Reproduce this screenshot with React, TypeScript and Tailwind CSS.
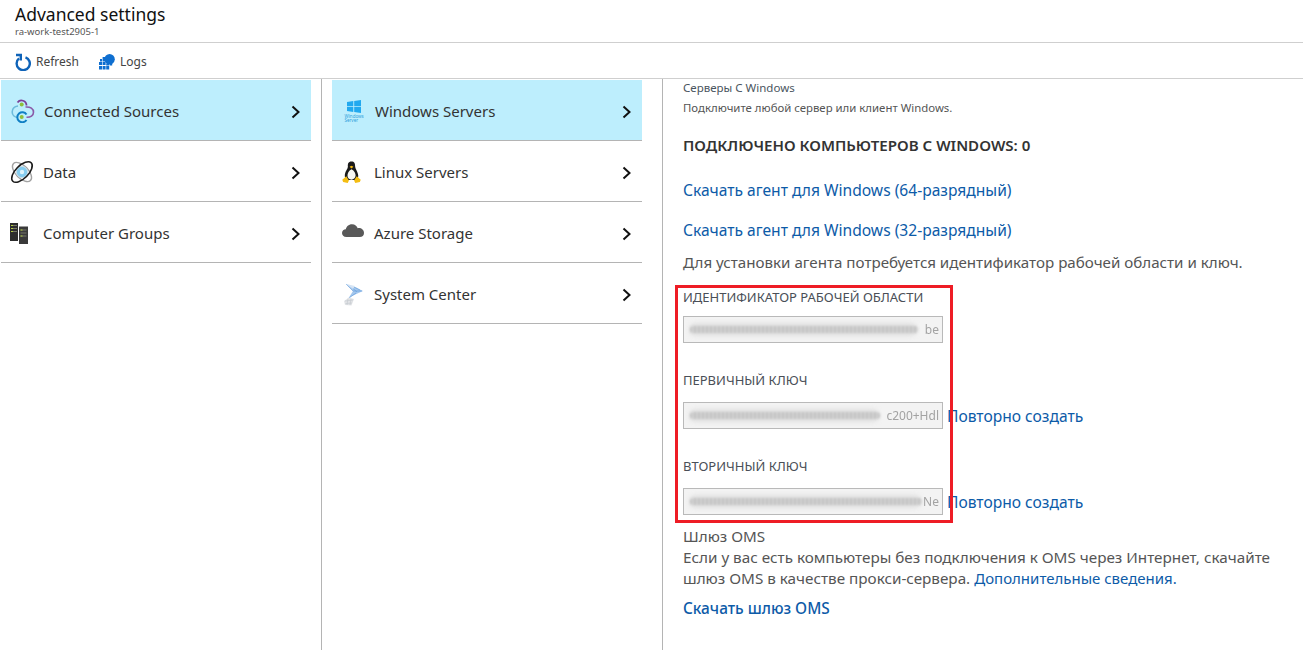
const sans = "font-['Noto_Sans','Open_Sans',sans-serif]";

function Chevron() {
  return (
    <svg width="10" height="14" viewBox="0 0 10 14" className="mt-[1px] shrink-0">
      <path d="M1.5 1.5 L7.5 7 L1.5 12.5" fill="none" stroke="#111" strokeWidth="2" />
    </svg>
  );
}

function ConnectedIcon() {
  return (
    <svg width="24" height="24" viewBox="0 0 24 24">
      <path d="M6.5 3.5 A5 5 0 0 1 15.5 6.5" fill="none" stroke="#7a3f98" strokeWidth="1.8" />
      <path d="M14.5 8 C19.5 7.5 22.5 10 22.5 13.2 C22.5 16.5 19.5 18.5 15.5 18.3" fill="none" stroke="#8a5aa8" strokeWidth="1.6" />
      <path d="M7 7 C3.5 7.5 1.2 10 1.2 13 C1.2 16 3.5 18.3 6.5 18.5" fill="none" stroke="#6dbbdc" strokeWidth="1.6" />
      <path d="M15.5 15.5 A5 5 0 1 0 15.5 21" fill="none" stroke="#0f7fc4" strokeWidth="2" />
      <circle cx="10.7" cy="5.5" r="2" fill="#8fbe3a" /><circle cx="10.7" cy="18" r="2" fill="#8fbe3a" />
    </svg>
  );
}

function DataIcon() {
  return (
    <svg width="24" height="24" viewBox="0 0 24 24">
      <ellipse cx="12" cy="12" rx="12" ry="6.2" fill="none" stroke="#a2a2a2" strokeWidth="1.4" transform="rotate(45 12 12)" />
      <circle cx="12" cy="12" r="5.6" fill="#86cdf0" stroke="#c9dfe9" strokeWidth="1" />
      <circle cx="12" cy="12" r="2.2" fill="#dff4fc" />
      <ellipse cx="12" cy="12" rx="13" ry="6.4" fill="none" stroke="#1d1d1d" strokeWidth="1.6" transform="rotate(-45 12 12)" />
    </svg>
  );
}

function GroupsIcon() {
  return (
    <svg width="19" height="21" viewBox="0 0 19 21">
      <rect x="0" y="0" width="8" height="18" fill="#2d2d2d" />
      <rect x="9" y="3.5" width="9" height="17.5" fill="#3a3a3a" />
      <path d="M1 2.5h6M1 5.5h6M1 8.5h6M10.5 7h6M10.5 10h6M10.5 13h6" stroke="#77776a" strokeWidth="1" />
      <rect x="1" y="2" width="2" height="1" fill="#b4cf3f" /><rect x="1" y="5" width="2" height="1" fill="#b4cf3f" /><rect x="1" y="8" width="2" height="1" fill="#b4cf3f" />
      <rect x="10.5" y="6.5" width="2" height="1" fill="#b4cf3f" /><rect x="10.5" y="12.5" width="2" height="1" fill="#b4cf3f" />
    </svg>
  );
}

function WindowsIcon() {
  return (
    <div className="flex h-[23px] w-[18px] flex-col items-center">
      <svg width="14" height="13" viewBox="0 0 14 13" className="shrink-0">
        <path d="M0 2 L6.3 1 V6.2 H0 Z M7.2 0.9 L14 0 V6.2 H7.2 Z M0 7 H6.3 V12 L0 11 Z M7.2 7 H14 V13 L7.2 12 Z" fill="#22a9ef" />
      </svg>
      <div className="mt-[1px] w-[18px] text-[4.5px] leading-[4.5px] text-[#2f9fdc]">Windows Server</div>
    </div>
  );
}

function LinuxIcon() {
  return (
    <svg width="19" height="23" viewBox="0 0 20 24">
      <path d="M10 0.5 C6.5 0.5 6 3 6.2 6 C6.3 8 3.5 10.5 3 14 C2.7 16.5 3.5 19 5 20 H15 C17 18.5 17.5 16 16.8 13.5 C16 10.5 13.8 8 13.8 5.5 C13.8 2.5 13 0.5 10 0.5 Z" fill="#1a1a1a" />
      <path d="M10 8.5 C7 10 5.6 13 5.8 16 C6 18 8 19.5 10 19.5 C12 19.5 14.2 18 14.3 15.5 C14.5 13 13 10 10 8.5 Z" fill="#f7f7f3" />
      <path d="M8 6 L10 5 L12 6 L10 7.8 Z" fill="#f2b70c" />
      <path d="M4.5 16 L7.3 20.5 L6 23 L1.2 22 L0.3 19.5 Z M15.5 16 L12.7 20.5 L14 23 L18.8 22 L19.7 19.5 Z" fill="#f4bd12" />
    </svg>
  );
}

function CloudIcon() {
  return (
    <svg width="22" height="14" viewBox="0 0 22 14">
      <path d="M4.5 14 C1.5 14 0 12.3 0 10 C0 7.8 1.8 6.3 3.8 6.3 C4.3 3.6 6.5 1.2 10 1.2 C13 1.2 15 3 15.7 5.2 C19 4.6 22 6.8 22 10 C22 12.4 20.3 14 17.8 14 Z" fill="#595959" />
    </svg>
  );
}

function CenterIcon() {
  return (
    <svg width="21" height="23" viewBox="0 0 21 23">
      <path d="M3 1 L13 4.5 L20 8 L9 13 L5 16 L10 8 Z" fill="#8db9e8" opacity="0.8" />
      <path d="M3 1 L10 8 M6 2 L14 9 M10 3.5 L17 7 M10 8 L19 8 M6 15 L13 10" stroke="#4f8fd6" strokeWidth="0.7" opacity="0.7" />
      <path d="M3 1 L12 3 L10 6 Z" fill="#d5e4f4" />
      <path d="M6 14.5 L11 16 L8.5 22.5 L2 22 L1 18 Z" fill="#e2e4e7" />
      <path d="M2 18 L10 17 M2.5 20.5 L9 20 M5 15.5 L4 22 M8 16 L7 22" stroke="#c3c7cc" strokeWidth="0.6" />
    </svg>
  );
}

function NavRow({ icon, label, active, iconClass }: { icon: React.ReactNode; label: string; active?: boolean; iconClass: string }) {
  return (
    <div className={`flex h-[61px] w-[310px] items-center border-b border-[#b4b4b4] pr-[10px] pt-[2px] ${active ? "bg-[#bdeefd]" : "bg-white"}`}>
      <div className={`flex shrink-0 justify-center ${iconClass}`}>{icon}</div>
      <span className="flex-1 text-[15px] leading-[20px] text-[#333]">{label}</span>
      <Chevron />
    </div>
  );
}

function Field({ label, tail, smear, action, labelClass, inputGap }: { label: string; tail: string; smear: string; action?: boolean; labelClass: string; inputGap: string }) {
  return (
    <div className={labelClass}>
      <div className="text-[13px] leading-[16px] text-[#4a4f57]">{label}</div>
      <div className={`flex items-center gap-[4px] ${inputGap}`}>
        <div className="relative flex h-[27px] w-[260px] shrink-0 items-center justify-end overflow-hidden border border-[#b9b9b9] bg-[#f3f3f3] px-[3px]">
          <div className={`absolute left-[5px] top-[6px] h-[13px] rounded-full bg-[#e0e0e0] blur-[2px] ${smear}`} />
          <div className={`absolute left-[6px] top-[9px] h-[7px] rounded-full bg-[repeating-linear-gradient(90deg,#c0c0c0_0,#c0c0c0_2px,#d4d4d4_2px,#d4d4d4_4px)] blur-[0.8px] ${smear}`} />
          <span className="relative text-[12px] text-[#a3a3a3] blur-[0.5px]">{tail}</span>
        </div>
        {action && <a className="text-[15.6px] leading-[20px] text-[#0d5ba8]">Повторно создать</a>}
      </div>
    </div>
  );
}

export default function App() {
  return (
    <div className={`relative flex h-[650px] w-[1303px] flex-col overflow-hidden bg-white ${sans}`}>
      <header className="h-[43px] shrink-0 border-b border-[#cfcfcf] pl-[15px] pt-[3px]">
        <div className="text-[17.5px] leading-[22px] text-[#111]">Advanced settings</div>
        <div className="mt-[1px] text-[9.5px] leading-[12px] text-[#555]">ra-work-test2905-1</div>
      </header>
      <div className="flex h-[36px] shrink-0 items-center border-b border-[#cfcfcf] pl-[15px] pt-[2px] text-[12px] text-[#444]">
        <svg width="16" height="18" viewBox="0 0 16 18">
          <path d="M10.5 4.3 A6.6 6.6 0 1 1 4 5.4" fill="none" stroke="#0f63b8" strokeWidth="2.4" />
          <path d="M1 2 L5.8 2 L5.8 7.5" fill="none" stroke="#0f63b8" strokeWidth="2.4" />
        </svg>
        <span className="ml-[5px]">Refresh</span>
        <svg width="16" height="16" viewBox="0 0 16 16" className="ml-[20px]">
          <circle cx="10.6" cy="5.2" r="5.2" fill="#0f6fd0" />
          <path d="M1 5h2v2.4H1zM3.6 3h2.4v4.4H3.6zM0 8h3v3H0zM3.6 8h3v3H3.6zM7.2 9.5h3v2H7.2zM10.8 9.5h2.4v2h-2.4zM0 12h3v3.4H0zM3.6 12h3v3.4H3.6zM7.2 12h3v3.4H7.2z" fill="#0f6fd0" />
        </svg>
        <span className="ml-[5px]">Logs</span>
      </div>
      <main className="flex min-h-0 flex-1">
        <section className="w-[322px] shrink-0 border-r border-[#b4b4b4] pl-[1px] pt-[1px]">
          <NavRow active label="Connected Sources" icon={<ConnectedIcon />} iconClass="w-[43px]" />
          <NavRow label="Data" icon={<DataIcon />} iconClass="w-[42px]" />
          <NavRow label="Computer Groups" icon={<GroupsIcon />} iconClass="w-[42px] pr-[5px]" />
        </section>
        <section className="w-[341px] shrink-0 border-r border-[#b4b4b4] pl-[10px] pt-[1px]">
          <NavRow active label="Windows Servers" icon={<WindowsIcon />} iconClass="w-[43px]" />
          <NavRow label="Linux Servers" icon={<LinuxIcon />} iconClass="w-[42px] pr-[4px]" />
          <NavRow label="Azure Storage" icon={<CloudIcon />} iconClass="w-[42px] -mt-[6px]" />
          <NavRow label="System Center" icon={<CenterIcon />} iconClass="w-[42px]" />
        </section>
        <section className="min-w-0 flex-1 pl-[20px] pr-[20px]">
          <div className="mt-[1px] text-[11.5px] leading-[16px] text-[#4a5560]">Серверы С Windows</div>
          <div className="mt-[4px] text-[11.4px] leading-[16px] text-[#555]">Подключите любой сервер или клиент Windows.</div>
          <div className="mt-[19px] text-[15.1px] font-semibold leading-[20px] text-[#333]">ПОДКЛЮЧЕНО КОМПЬЮТЕРОВ С WINDOWS: 0</div>
          <a className="mt-[24px] block text-[15.6px] leading-[22px] text-[#0d5ba8]">Скачать агент для Windows (64-разрядный)</a>
          <a className="mt-[18px] block text-[15.6px] leading-[22px] text-[#0d5ba8]">Скачать агент для Windows (32-разрядный)</a>
          <div className="mt-[10px] text-[15.15px] leading-[22px] text-[#555]">Для установки агента потребуется идентификатор рабочей области и ключ.</div>
          <Field labelClass="mt-[16px]" inputGap="mt-[11px]" label="ИДЕНТИФИКАТОР РАБОЧЕЙ ОБЛАСТИ" tail="be" smear="w-[228px]" />
          <Field labelClass="mt-[29px]" inputGap="mt-[14px]" label="ПЕРВИЧНЫЙ КЛЮЧ" tail="c200+Hdl" smear="w-[190px]" action />
          <Field labelClass="mt-[29px]" inputGap="mt-[14px]" label="ВТОРИЧНЫЙ КЛЮЧ" tail="Ne" smear="w-[232px]" action />
          <div className="mt-[11px] text-[15.2px] leading-[21px] text-[#555]">Шлюз OMS</div>
          <div className="text-[15.25px] leading-[21px] text-[#555]">Если у вас есть компьютеры без подключения к OMS через Интернет, скачайте</div>
          <div className="flex gap-[4px] text-[15.25px] leading-[21px] text-[#555]">
            <span>шлюз OMS в качестве прокси-сервера.</span>
            <a className="text-[15px] text-[#0d5ba8]">Дополнительные сведения.</a>
          </div>
          <a className="mt-[9px] block text-[15.4px] font-medium leading-[21px] text-[#0d5ba8]">Скачать шлюз OMS</a>
        </section>
      </main>
      <div className="pointer-events-none absolute left-[675px] top-[285px] h-[238px] w-[278px] border-[3px] border-[#ee1c25]" />
    </div>
  );
}
